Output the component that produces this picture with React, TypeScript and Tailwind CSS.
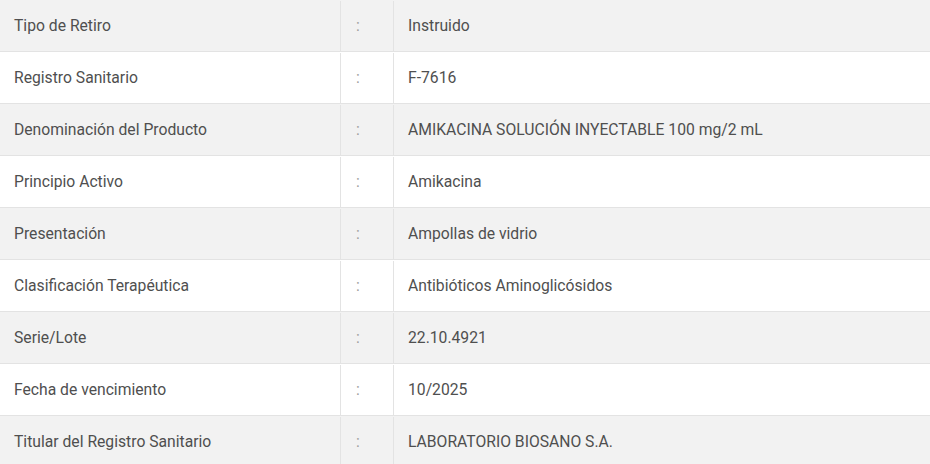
import React from "react";

const rows: [string, string][] = [
  ["Tipo de Retiro", "Instruido"],
  ["Registro Sanitario", "F-7616"],
  ["Denominación del Producto", "AMIKACINA SOLUCIÓN INYECTABLE 100 mg/2 mL"],
  ["Principio Activo", "Amikacina"],
  ["Presentación", "Ampollas de vidrio"],
  ["Clasificación Terapéutica", "Antibióticos Aminoglicósidos"],
  ["Serie/Lote", "22.10.4921"],
  ["Fecha de vencimiento", "10/2025"],
  ["Titular del Registro Sanitario", "LABORATORIO BIOSANO S.A."],
];

export default function App() {
  return (
    <div
      className="w-[930px] h-[464px] overflow-hidden bg-white text-[15.7px] text-[#4f4f4f]"
      style={{ fontFamily: "Roboto, 'Liberation Sans', sans-serif" }}
    >
      {rows.map(([k, v], i) => (
        <div
          key={k}
          className={`flex h-[52px] border-b border-[#e3e3e3] pt-[1px] ${i % 2 === 0 ? "bg-[#f2f2f2]" : "bg-white"}`}
        >
          <div className="flex w-[341px] shrink-0 items-center border-r border-[#e3e3e3] pl-[14px]">{k}</div>
          <div className="flex w-[53px] shrink-0 items-center border-r border-[#e3e3e3] pl-[15px] text-[#a0a0a0]">:</div>
          <div className="flex flex-1 items-center pl-[14px]">{v}</div>
        </div>
      ))}
    </div>
  );
}
